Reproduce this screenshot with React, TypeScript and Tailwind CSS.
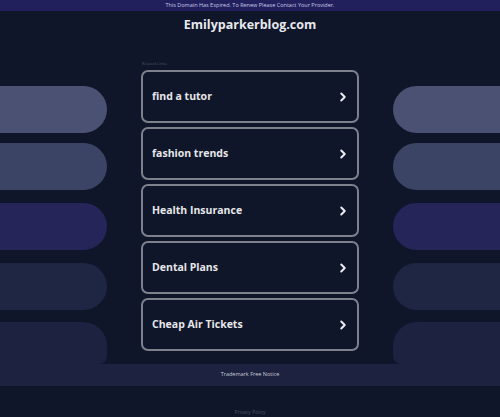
import { ChevronRight } from 'lucide-react';

const links = ['find a tutor', 'fashion trends', 'Health Insurance', 'Dental Plans', 'Cheap Air Tickets'];

const pills = [
  { color: 'bg-[#4a5172]', gap: 'mt-0', h: 'h-[47px]' },
  { color: 'bg-[#3c4466]', gap: 'mt-[10px]', h: 'h-[47px]' },
  { color: 'bg-[#25255a]', gap: 'mt-[13px]', h: 'h-[47px]' },
  { color: 'bg-[#1f2644]', gap: 'mt-[13px]', h: 'h-[47px]' },
  { color: 'bg-[#1c2240]', gap: 'mt-[12px]', h: 'h-[42px]' },
];

const SideColumn = ({ side }: { side: 'left' | 'right' }) => (
  <div className="w-[107px] shrink-0 pt-[37px] flex flex-col">
    {pills.map((p, i) => {
      const last = i === pills.length - 1;
      let round = '';
      if (side === 'left') round = last ? 'rounded-tr-[24px] rounded-br-[8px]' : 'rounded-r-full';
      else round = last ? 'rounded-tl-[24px] rounded-bl-[8px]' : 'rounded-l-full';
      return <div key={i} className={`${p.color} ${p.gap} ${p.h} ${round}`} />;
    })}
  </div>
);

export default function App() {
  return (
    <div className="w-[500px] h-[417px] overflow-hidden bg-[#0f1629] font-['Open_Sans',sans-serif] text-gray-200">
      {/* top notice */}
      <div className="h-[11px] bg-[#211f5c] flex items-center justify-center">
        <span className="text-[5.5px] leading-none text-[#c7c9e6]">
          This Domain Has Expired. To Renew Please Contact Your Provider.
        </span>
      </div>

      {/* title */}
      <div className="h-[38px] flex justify-center pt-[6px]">
        <h1 className="text-[12.5px] font-bold text-[#e8e9ee] leading-[16px]">Emilyparkerblog.com</h1>
      </div>

      {/* main */}
      <div className="flex h-[315px] justify-between">
        <SideColumn side="left" />
        <div className="w-[218px] shrink-0 pt-[8px]">
          <div className="text-[4px] leading-[13px] text-[#4b5366] pl-[1px]">Related Links</div>
          <div className="flex flex-col gap-[4px]">
            {links.map((l) => (
              <a
                key={l}
                href="#"
                className="h-[53px] rounded-[7px] border-2 border-[#7c818c] flex items-center justify-between pl-[9px] pr-[7px]"
              >
                <span className="text-[10.5px] font-bold text-[#e6e7ea]">{l}</span>
                <ChevronRight size={14} strokeWidth={3.4} className="text-[#eceef2]" />
              </a>
            ))}
          </div>
        </div>
        <SideColumn side="right" />
      </div>

      {/* band */}
      <div className="h-[22px] bg-[#1c2240] flex items-center justify-center">
        <span className="text-[5.5px] leading-none text-[#c9cbd6]">Trademark Free Notice</span>
      </div>

      {/* footer */}
      <div className="flex justify-center pt-[24px]">
        <span className="text-[5px] leading-none text-[#4b5366]">Privacy Policy</span>
      </div>
    </div>
  );
}
